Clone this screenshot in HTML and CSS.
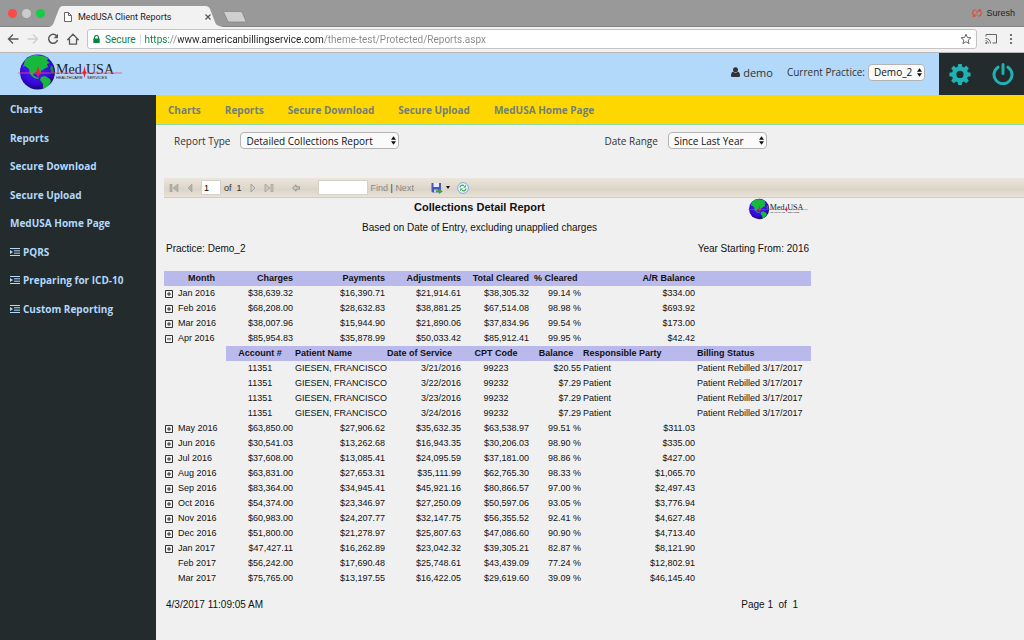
FILE: index.html
```html
<!DOCTYPE html>
<html lang="en">

<head>
    <meta charset="UTF-8">
    <meta name="viewport" content="width=device-width, initial-scale=1.0">
    <title>MedUSA Client Reports</title>
    <link rel="stylesheet" href="styles.css">
</head>

<body>
    <svg class="sprite" aria-hidden="true">
        <symbol id="plus" viewBox="0 0 8 8">
            <path d="M.5.5h7v7h-7zM2 4h4M4 2v4" fill="none" stroke="#333" />
        </symbol>
        <symbol id="minus" viewBox="0 0 8 8">
            <path d="M.5.5h7v7h-7zM2 4h4" fill="none" stroke="#333" />
        </symbol>
        <symbol id="indent" viewBox="0 0 10 8">
            <path d="M0 .5h10M4 2.8h6M4 5.200h6M0 7.500h10" fill="none" stroke="currentColor" />
            <path d="M0 2l3 2-3 2z" fill="currentColor" />
        </symbol>
        <symbol id="arrows" viewBox="0 0 6 10">
            <path d="M3 0l3 4H0zM3 10l3-4H0z" fill="#111" />
        </symbol>
    </svg>

    <div class="tabStrip">
        <div class="lights">
            <span class="light red"></span>
            <span class="light gray"></span>
            <span class="light green"></span>
        </div>
        <div class="tab">
            <svg class="tabShape" viewBox="0 0 174 21" preserveAspectRatio="none">
                <path d="M0 21C3 20 4 19 5 16l5-13C11 1 12 0 14 0h142c3 0 4 1 5 3l5 13c1 3 3 4 8 5z" fill="#f2f2f2" />
            </svg>
            <svg class="fileIcon" viewBox="0 0 8 10">
                <path d="M.5.5h4l3 3v6h-7zM4.500.5v3h3" fill="#fff" stroke="#666" />
            </svg>
            <span class="tabTitle">MedUSA Client Reports</span>
            <button class="tabClose" aria-label="Close tab">
                <svg viewBox="0 0 6 6"><path d="M.5.5l5 5M5.500.5l-5 5" stroke="#555" stroke-width="1.200" /></svg>
            </button>
        </div>
        <button class="newTab" aria-label="New tab">
            <svg viewBox="0 0 24 12"><path d="M2 .5h15c1 0 2 .5 2.500 1.500l3 7c.5 1.500 0 2-1 2H7c-1 0-2-.5-2.500-1.500L1 2C.5 1 1 .5 2 .5z" fill="#cfcfcf" stroke="#858585" stroke-width="0.800" /></svg>
        </button>
        <div class="profile">
            <svg viewBox="0 0 10 8"><path d="M3.500.8C0 1 0 6 2.500 7M.8 7.200h2.200V5M6.500 7.200C10 7 10 2 7.500 1M9.200.8H7V3M5 1.500v3M5 5.500v1.200" fill="none" stroke="#e04a2f" stroke-width="1.100" /></svg>
            <span>Suresh</span>
        </div>
    </div>

    <div class="browserBar">
        <button aria-label="Back"><svg viewBox="0 0 12 12"><path d="M11.500 6H1.500M6 1.500L1.500 6 6 10.500" fill="none" stroke="#5a5a5a" stroke-width="1.400" /></svg></button>
        <button aria-label="Forward"><svg viewBox="0 0 12 12"><path d="M.5 6h10M6 1.500L10.500 6 6 10.500" fill="none" stroke="#cfcfcf" stroke-width="1.400" /></svg></button>
        <button aria-label="Reload"><svg viewBox="0 0 12 12"><path d="M10 3.500A4.500 4.500 0 1 0 10.500 7" fill="none" stroke="#5a5a5a" stroke-width="1.500" /><path d="M11 .8V5.200H6.600z" fill="#5a5a5a" /></svg></button>
        <button aria-label="Home"><svg viewBox="0 0 12 12"><path d="M.8 6.500L6 1.200l5.200 5.300H9.500v4.700h-7V6.500z" fill="none" stroke="#5a5a5a" stroke-width="1.300" /></svg></button>
        <div class="addressBox">
            <svg class="lock" viewBox="0 0 7 8"><path d="M1.500 4V2.500a2 2 0 0 1 4 0V4" fill="none" stroke="#0b8043" stroke-width="1.200" /><path d="M.3 3.500h6.400V8H.3z" fill="#0b8043" /></svg>
            <span class="secure">Secure</span>
            <input class="address" type="text" aria-label="Address" value="https://www.americanbillingservice.com/theme-test/Protected/Reports.aspx">
            <button aria-label="Bookmark"><svg viewBox="0 0 12 12"><path d="M6 1.200l1.400 3.300 3.500.3-2.700 2.300.9 3.500L6 8.700l-3.100 1.900.9-3.500L1.100 4.800l3.500-.3z" fill="none" stroke="#666" /></svg></button>
        </div>
        <button aria-label="Cast"><svg viewBox="0 0 12 12"><path d="M1 3.500V1.500h10.500v8.500H7.500M.5 5.500c3 0 5 2 5 5M.5 7.700c1.800 0 2.800 1 2.800 2.800" fill="none" stroke="#666" /><circle cx="1.200" cy="10" r="0.900" fill="#666" /></svg></button>
        <button aria-label="Menu"><svg viewBox="0 0 12 12"><circle cx="6" cy="2" r="1.100" fill="#555" /><circle cx="6" cy="6" r="1.100" fill="#555" /><circle cx="6" cy="10" r="1.100" fill="#555" /></svg></button>
    </div>

    <header class="siteHeader">
        <svg class="logo" viewBox="0 0 108 38" role="img" aria-label="MedUSA Healthcare Services">
            <defs>
                <radialGradient id="globe" cx="45%" cy="40%" r="60%">
                    <stop offset="0" stop-color="#4a22ff" />
                    <stop offset="0.7" stop-color="#3908e0" />
                    <stop offset="1" stop-color="#1c0475" />
                </radialGradient>
            </defs>
            <g id="logo">
                <circle cx="20.500" cy="19" r="17.500" fill="url(#globe)" />
                <path d="M8 7c3-3 7-5 11-5l7 1 5 2-1 3 3 2-3 1 1 3-4 2-3 2-1 4-2-3-4 1-1 2 3 2 3 1-1 1-4-1-4-4-1-5-4-3-2 1z" fill="#18b83c" />
                <path d="M24 24l4-1 5 3 1 2-2 4-4 3-2 1v-5l-3-4z" fill="#18b83c" />
                <path d="M34 12l2 2 1 5-2 1-2-4z" fill="#0d8a3c" />
                <text x="39" y="21" class="logoName">Med</text>
                <text x="69" y="21" class="logoName">USA</text>
                <text x="39" y="26" class="logoSmall">HEALTHCARE</text>
                <text x="70" y="26" class="logoSmall">SERVICES</text>
                <path d="M1 20h104" fill="none" stroke="#e8506c" stroke-width="0.800" />
                <path d="M18 20l1.500-2 1.500-5 1.500 5 1.500 2-1.500 1-1.500 4-1.500-4zM65 20l1.500-2 1-5 1 5 1 2-1 1-1 4-1-4z" fill="#e8203c" />
            </g>
        </svg>
        <div class="user">
            <svg viewBox="0 0 9 10"><circle cx="4.500" cy="2.700" r="2.500" fill="#333" /><path d="M0 8.500C0 6 1 5 2.300 4.800a3.200 3.200 0 0 0 4.400 0C8 5 9 6 9 8.500 9 9.500 8.500 10 7.500 10h-6C.5 10 0 9.500 0 8.500z" fill="#333" /></svg>
            <span>demo</span>
        </div>
        <label for="practice">Current Practice:</label>
        <span class="selectWrap practice">
            <select id="practice"><option>Demo_2</option></select>
            <svg><use href="#arrows" /></svg>
        </span>
        <div class="headerTools">
            <button aria-label="Settings">
                <svg viewBox="0 0 22 22"><path fill="#20b2b2" fill-rule="evenodd" d="M9.200 1h3.600l.5 2.800 1.600.7 2.400-1.700 2.500 2.500-1.700 2.400.7 1.600 2.800.5v3.400l-2.800.5-.7 1.600 1.700 2.400-2.500 2.500-2.400-1.700-1.600.7-.5 2.800H9.200l-.5-2.800-1.600-.7-2.400 1.700-2.500-2.500 1.700-2.400-.7-1.600L.4 13.200V9.800l2.800-.5.7-1.600-1.700-2.400 2.500-2.500 2.400 1.700 1.600-.7zM11 7.800a3.600 3.600 0 1 0 0 7.200 3.600 3.600 0 0 0 0-7.200z" /></svg>
            </button>
            <button aria-label="Log out">
                <svg viewBox="0 0 22 22"><path d="M6 4.200a9 9 0 1 0 10 0M11 1.500v9" fill="none" stroke="#20b2b2" stroke-width="3" stroke-linecap="round" /></svg>
            </button>
        </div>
    </header>

    <div class="layout">
        <nav class="sidebar">
            <ul>
                <li><a href="#">Charts</a></li>
                <li><a href="#">Reports</a></li>
                <li><a href="#">Secure Download</a></li>
                <li><a href="#">Secure Upload</a></li>
                <li><a href="#">MedUSA Home Page</a></li>
                <li><a href="#"><svg><use href="#indent" /></svg>PQRS</a></li>
                <li><a href="#"><svg><use href="#indent" /></svg>Preparing for ICD-10</a></li>
                <li><a href="#"><svg><use href="#indent" /></svg>Custom Reporting</a></li>
            </ul>
        </nav>

        <main>
            <nav class="topNav">
                <a href="#">Charts</a>
                <a href="#">Reports</a>
                <a href="#">Secure Download</a>
                <a href="#">Secure Upload</a>
                <a href="#">MedUSA Home Page</a>
            </nav>

            <form class="filters">
                <div class="filter">
                    <label for="reportType">Report Type</label>
                    <span class="selectWrap reportType">
                        <select id="reportType"><option>Detailed Collections Report</option></select>
                        <svg><use href="#arrows" /></svg>
                    </span>
                </div>
                <div class="filter">
                    <label for="dateRange">Date Range</label>
                    <span class="selectWrap dateRange">
                        <select id="dateRange"><option>Since Last Year</option></select>
                        <svg><use href="#arrows" /></svg>
                    </span>
                </div>
            </form>

            <div class="reportBar">
                <div class="pager">
                    <button aria-label="First page"><svg viewBox="0 0 10 8"><path d="M1 0h2v8H1zM9 0v8L4 4z" fill="#b5b2ac" stroke="#97948e" stroke-width="0.500" /></svg></button>
                    <button aria-label="Previous page"><svg viewBox="0 0 10 8"><path d="M7 0v8L3 4z" fill="#b5b2ac" stroke="#97948e" stroke-width="0.500" /></svg></button>
                    <input class="pageNumber" type="text" value="1" aria-label="Page number">
                    <span>of&nbsp; 1</span>
                    <button aria-label="Next page"><svg viewBox="0 0 10 8"><path d="M3 0v8l4-4z" fill="#d5d2ca" stroke="#97948e" stroke-width="0.800" /></svg></button>
                    <button aria-label="Last page"><svg viewBox="0 0 10 8"><path d="M7 0h2v8H7zM1 0v8l5-4z" fill="#c8c5be" stroke="#97948e" stroke-width="0.600" /></svg></button>
                </div>
                <button aria-label="Back to parent"><svg viewBox="0 0 10 8"><path d="M1.500 4L5 .8v2h3.500v2.400H5v2z" fill="#d0cdc6" stroke="#8f8c86" stroke-width="0.900" /></svg></button>
                <div class="finder">
                    <input class="findText" type="text" aria-label="Find text">
                    <span><a href="#">Find</a> | <a href="#">Next</a></span>
                </div>
                <div class="export">
                    <button class="save" aria-label="Export"><svg viewBox="0 0 12 12"><path d="M.5 1h9.500v9.500H1.500l-1-1z" fill="#4a55c0" /><path d="M2.500 1h5.500v4H2.500z" fill="#e6ebff" /><path d="M3 7.500h4v3H3z" fill="#c5cbe8" /><path d="M5 8.200h3V6.500l3.800 3L8 12v-1.800H5z" fill="#3da53d" /></svg><svg class="caret" viewBox="0 0 4 3"><path d="M0 0h4L2 3z" fill="#111" /></svg></button>
                    <button class="refresh" aria-label="Refresh"><svg viewBox="0 0 12 12"><circle cx="6" cy="6" r="5.400" fill="#eef6ff" stroke="#7fa8d8" /><path d="M3 5.500c0-2 2.500-3 4-1.800M9 6.500c0 2-2.500 3-4 1.800" fill="none" stroke="#3ba556" stroke-width="1.200" /><path d="M8.800 2.800v2.700H6.200zM3.200 9.200V6.500h2.600z" fill="#3ba556" /></svg></button>
                </div>
            </div>

            <section class="report">
                <div class="reportHead">
                    <div class="titles">
                        <h1>Collections Detail Report</h1>
                        <p>Based on Date of Entry, excluding unapplied charges</p>
                    </div>
                    <svg class="smallLogo" viewBox="0 0 108 38" role="img" aria-label="MedUSA"><use href="#logo" /></svg>
                </div>
                <div class="reportInfo">
                    <span>Practice: Demo_2</span>
                    <span>Year Starting From: 2016</span>
                </div>

                <table>
                    <colgroup>
                        <col class="colToggle">
                        <col class="colMonth">
                        <col class="colCharges">
                        <col class="colPayments">
                        <col class="colAdjust">
                        <col class="colCleared">
                        <col class="colPercent">
                        <col class="colBalance">
                        <col>
                    </colgroup>
                    <thead>
                        <tr><th></th><th>Month</th><th class="num">Charges</th><th class="num">Payments</th><th class="num">Adjustments</th><th class="num">Total Cleared</th><th class="percent">% Cleared</th><th class="num">A/R Balance</th><th></th></tr>
                    </thead>
                    <tbody>
                        <tr><td><button aria-label="Expand"><svg><use href="#plus" /></svg></button></td><td>Jan 2016</td><td class="num">$38,639.32</td><td class="num">$16,390.71</td><td class="num">$21,914.61</td><td class="num">$38,305.32</td><td class="num">99.14 %</td><td class="num">$334.00</td><td></td></tr>
                        <tr><td><button aria-label="Expand"><svg><use href="#plus" /></svg></button></td><td>Feb 2016</td><td class="num">$68,208.00</td><td class="num">$28,632.83</td><td class="num">$38,881.25</td><td class="num">$67,514.08</td><td class="num">98.98 %</td><td class="num">$693.92</td><td></td></tr>
                        <tr><td><button aria-label="Expand"><svg><use href="#plus" /></svg></button></td><td>Mar 2016</td><td class="num">$38,007.96</td><td class="num">$15,944.90</td><td class="num">$21,890.06</td><td class="num">$37,834.96</td><td class="num">99.54 %</td><td class="num">$173.00</td><td></td></tr>
                        <tr><td><button aria-label="Collapse"><svg><use href="#minus" /></svg></button></td><td>Apr 2016</td><td class="num">$85,954.83</td><td class="num">$35,878.99</td><td class="num">$50,033.42</td><td class="num">$85,912.41</td><td class="num">99.95 %</td><td class="num">$42.42</td><td></td></tr>
                        <!-- accounts behind the April total -->
                        <tr><td colspan="2"></td><th>Account #</th><th class="text">Patient Name</th><th class="text">Date of Service</th><th>CPT Code</th><th>Balance</th><th class="text">Responsible Party</th><th class="text">Billing Status</th></tr>
                        <tr><td colspan="2"></td><td class="center">11351</td><td>GIESEN, FRANCISCO</td><td class="num">3/21/2016</td><td class="center">99223</td><td class="num">$20.55</td><td>Patient</td><td>Patient Rebilled 3/17/2017</td></tr>
                        <tr><td colspan="2"></td><td class="center">11351</td><td>GIESEN, FRANCISCO</td><td class="num">3/22/2016</td><td class="center">99232</td><td class="num">$7.29</td><td>Patient</td><td>Patient Rebilled 3/17/2017</td></tr>
                        <tr><td colspan="2"></td><td class="center">11351</td><td>GIESEN, FRANCISCO</td><td class="num">3/23/2016</td><td class="center">99232</td><td class="num">$7.29</td><td>Patient</td><td>Patient Rebilled 3/17/2017</td></tr>
                        <tr><td colspan="2"></td><td class="center">11351</td><td>GIESEN, FRANCISCO</td><td class="num">3/24/2016</td><td class="center">99232</td><td class="num">$7.29</td><td>Patient</td><td>Patient Rebilled 3/17/2017</td></tr>
                        <tr><td><button aria-label="Expand"><svg><use href="#plus" /></svg></button></td><td>May 2016</td><td class="num">$63,850.00</td><td class="num">$27,906.62</td><td class="num">$35,632.35</td><td class="num">$63,538.97</td><td class="num">99.51 %</td><td class="num">$311.03</td><td></td></tr>
                        <tr><td><button aria-label="Expand"><svg><use href="#plus" /></svg></button></td><td>Jun 2016</td><td class="num">$30,541.03</td><td class="num">$13,262.68</td><td class="num">$16,943.35</td><td class="num">$30,206.03</td><td class="num">98.90 %</td><td class="num">$335.00</td><td></td></tr>
                        <tr><td><button aria-label="Expand"><svg><use href="#plus" /></svg></button></td><td>Jul 2016</td><td class="num">$37,608.00</td><td class="num">$13,085.41</td><td class="num">$24,095.59</td><td class="num">$37,181.00</td><td class="num">98.86 %</td><td class="num">$427.00</td><td></td></tr>
                        <tr><td><button aria-label="Expand"><svg><use href="#plus" /></svg></button></td><td>Aug 2016</td><td class="num">$63,831.00</td><td class="num">$27,653.31</td><td class="num">$35,111.99</td><td class="num">$62,765.30</td><td class="num">98.33 %</td><td class="num">$1,065.70</td><td></td></tr>
                        <tr><td><button aria-label="Expand"><svg><use href="#plus" /></svg></button></td><td>Sep 2016</td><td class="num">$83,364.00</td><td class="num">$34,945.41</td><td class="num">$45,921.16</td><td class="num">$80,866.57</td><td class="num">97.00 %</td><td class="num">$2,497.43</td><td></td></tr>
                        <tr><td><button aria-label="Expand"><svg><use href="#plus" /></svg></button></td><td>Oct 2016</td><td class="num">$54,374.00</td><td class="num">$23,346.97</td><td class="num">$27,250.09</td><td class="num">$50,597.06</td><td class="num">93.05 %</td><td class="num">$3,776.94</td><td></td></tr>
                        <tr><td><button aria-label="Expand"><svg><use href="#plus" /></svg></button></td><td>Nov 2016</td><td class="num">$60,983.00</td><td class="num">$24,207.77</td><td class="num">$32,147.75</td><td class="num">$56,355.52</td><td class="num">92.41 %</td><td class="num">$4,627.48</td><td></td></tr>
                        <tr><td><button aria-label="Expand"><svg><use href="#plus" /></svg></button></td><td>Dec 2016</td><td class="num">$51,800.00</td><td class="num">$21,278.97</td><td class="num">$25,807.63</td><td class="num">$47,086.60</td><td class="num">90.90 %</td><td class="num">$4,713.40</td><td></td></tr>
                        <tr><td><button aria-label="Expand"><svg><use href="#plus" /></svg></button></td><td>Jan 2017</td><td class="num">$47,427.11</td><td class="num">$16,262.89</td><td class="num">$23,042.32</td><td class="num">$39,305.21</td><td class="num">82.87 %</td><td class="num">$8,121.90</td><td></td></tr>
                        <tr><td></td><td>Feb 2017</td><td class="num">$56,242.00</td><td class="num">$17,690.48</td><td class="num">$25,748.61</td><td class="num">$43,439.09</td><td class="num">77.24 %</td><td class="num">$12,802.91</td><td></td></tr>
                        <tr><td></td><td>Mar 2017</td><td class="num">$75,765.00</td><td class="num">$13,197.55</td><td class="num">$16,422.05</td><td class="num">$29,619.60</td><td class="num">39.09 %</td><td class="num">$46,145.40</td><td></td></tr>
                    </tbody>
                </table>

                <div class="reportFoot">
                    <span>4/3/2017 11:09:05 AM</span>
                    <span>Page 1&nbsp; of&nbsp; 1</span>
                </div>
            </section>
        </main>
    </div>
</body>

</html>
```

FILE: styles.css
```css
* {
  margin: 0;
  padding: 0;
  box-sizing: border-box;
}

body {
  min-height: 100vh;
  display: flex;
  flex-direction: column;
  font-family: "Open Sans", sans-serif;
  font-size: 10px;
  color: #333;
  background-color: #f0f0f0;
}

button {
  border: none;
  background: none;
  cursor: pointer;
}

svg {
  display: block;
}

a {
  color: inherit;
  text-decoration: none;
}

.sprite {
  position: absolute;
  width: 0;
  height: 0;
}

.logoName {
  font-family: "Liberation Serif", serif;
  font-size: 14px;
  fill: #222;
}

.logoSmall {
  font-family: "Liberation Sans", sans-serif;
  font-size: 4px;
  fill: #222;
}

/* browser window */
.tabStrip {
  display: flex;
  align-items: flex-end;
  height: 27px;
  background-color: #999;
  border-bottom: 1px solid #858585;
  font-family: Roboto, sans-serif;
  color: #222;
}

.lights {
  display: flex;
  gap: 5px;
  align-self: center;
  padding: 0 4px 0 8px;
}

.light {
  width: 9px;
  height: 9px;
  border-radius: 50%;
}

.red {
  background-color: #fc4a48;
}

.gray {
  background-color: #ccc;
}

.green {
  background-color: #15cc45;
}

.tab {
  position: relative;
  display: flex;
  align-items: center;
  width: 174px;
  height: 21px;
  padding: 0 12px 0 15px;
  margin-bottom: -1px;
  font-size: 9px;
}

.tabShape {
  position: absolute;
  inset: 0;
  width: 100%;
  height: 100%;
}

.fileIcon {
  position: relative;
  width: 8px;
  height: 10px;
  margin-right: 6px;
}

.tabTitle {
  position: relative;
  flex: 1;
  white-space: nowrap;
}

.tabClose {
  position: relative;
}

.tabClose svg {
  width: 6px;
  height: 6px;
}

.newTab {
  padding-bottom: 3px;
}

.newTab svg {
  width: 24px;
  height: 12px;
}

.profile {
  display: flex;
  align-items: center;
  align-self: center;
  gap: 4px;
  margin-left: auto;
  padding-right: 9px;
  font-family: "Liberation Sans", sans-serif;
  font-size: 9px;
}

.profile svg {
  width: 10px;
  height: 8px;
}

.browserBar {
  display: flex;
  align-items: center;
  gap: 8px;
  height: 26px;
  padding: 0 7px 1px;
  background-color: #f2f2f2;
  border-bottom: 1px solid #b8b8b8;
  font-family: Roboto, sans-serif;
}

.browserBar button svg {
  width: 12px;
  height: 12px;
}

.addressBox {
  flex: 1;
  display: flex;
  align-items: center;
  height: 20px;
  padding: 0 4px 0 5px;
  background-color: #fff;
  border: 1px solid #c4c4c4;
  border-radius: 3px;
}

.lock {
  width: 7px;
  height: 8px;
  margin-right: 5px;
}

.secure {
  padding-right: 4px;
  margin-right: 4px;
  border-right: 1px solid #ddd;
  color: #0b8043;
}

/* scheme, host and path each get their own colour */
.address {
  flex: 1;
  min-width: 0;
  border: none;
  outline: none;
  font-family: Roboto, sans-serif;
  font-size: 10px;
  color: transparent;
  background: linear-gradient(to right, #0b8043 24px, #888 24px, #888 33px, #222 33px, #222 179px, #888 179px);
  -webkit-background-clip: text;
  background-clip: text;
}

/* site header */
.siteHeader {
  display: flex;
  align-items: center;
  height: 42px;
  padding-left: 17px;
  font-size: 10px;
  background-color: #b2d8fa;
}

.logo {
  width: 108px;
  height: 38px;
  margin: 0 auto 4px 0;
}

.user {
  display: flex;
  align-items: center;
  gap: 3px;
  margin: 0 14px 4px 0;
  font-size: 11px;
}

.user svg {
  width: 9px;
  height: 10px;
}

.siteHeader label,
.practice {
  margin-bottom: 4px;
}

.selectWrap {
  position: relative;
  display: inline-block;
}

.selectWrap select {
  display: block;
  width: 100%;
  height: 17px;
  padding: 0 5px;
  appearance: none;
  border: 1px solid #b4b4b4;
  border-radius: 4px;
  background-color: #fafafa;
  font-family: "Open Sans", sans-serif;
  font-size: 10px;
  color: #111;
}

.selectWrap svg {
  position: absolute;
  right: 3px;
  top: 4px;
  width: 5px;
  height: 9px;
  pointer-events: none;
}

.practice {
  width: 57px;
  margin-left: 3px;
  margin-right: 14px;
}

.headerTools {
  display: flex;
  align-items: center;
  justify-content: center;
  gap: 21px;
  width: 85px;
  height: 100%;
  background-color: #232b2d;
}

.headerTools svg {
  width: 22px;
  height: 22px;
}

.layout {
  flex: 1;
  display: flex;
}

.sidebar {
  width: 156px;
  background-color: #232b2d;
}

.sidebar ul {
  display: flex;
  flex-direction: column;
  height: 228px;
  list-style: none;
}

.sidebar li {
  flex: 1;
  display: flex;
  align-items: center;
  padding-left: 10px;
}

.sidebar a {
  display: flex;
  align-items: center;
  gap: 3px;
  font-weight: bold;
  color: #b2d8fa;
}

.sidebar svg {
  width: 10px;
  height: 8px;
}

main {
  flex: 1;
  min-width: 0;
}

.topNav {
  display: flex;
  align-items: center;
  gap: 24px;
  height: 30px;
  padding-left: 12px;
  background-color: #ffd700;
  border-bottom: 1px solid #8fd9a8;
  font-weight: bold;
  color: #71807b;
}

.filters {
  display: flex;
  gap: 205px;
  padding: 7px 18px 0;
}

.filter {
  display: flex;
  align-items: center;
  height: 17px;
  gap: 10px;
}

.reportType {
  width: 159px;
}

.dateRange {
  width: 99px;
}

/* report viewer toolbar */
.reportBar {
  display: flex;
  align-items: center;
  gap: 17px;
  height: 20px;
  margin: 29px 0 0 8px;
  padding-left: 5px;
  background: linear-gradient(#ebe5dc, #dcd4c8 60%, #e8e2d8);
  border-bottom: 1px solid #ccc;
  font-family: "Liberation Sans", sans-serif;
  font-size: 9px;
}

.reportBar svg {
  width: 10px;
  height: 8px;
}

.reportBar input {
  height: 15px;
  border: 1px solid #d5d2ca;
  background-color: #fff;
  font-family: "Liberation Sans", sans-serif;
  font-size: 9px;
}

.pager {
  display: flex;
  align-items: center;
  gap: 6px;
}

.pageNumber {
  width: 20px;
  padding-left: 2px;
}

.pager span {
  margin-left: -3px;
}

.finder {
  display: flex;
  align-items: center;
  gap: 3px;
}

.finder a {
  color: #888;
}

.findText {
  width: 50px;
}

.export {
  display: flex;
  align-items: center;
  gap: 7px;
}

.save {
  display: flex;
  align-items: center;
  gap: 3px;
}

.export svg {
  width: 12px;
  height: 12px;
}

.export .caret {
  width: 4px;
  height: 3px;
}

/* report */
.report {
  max-width: 655px;
  padding-left: 8px;
  font-family: "Liberation Sans", sans-serif;
  color: #111;
}

.reportHead {
  display: grid;
  grid-template-columns: 48px 1fr 64px;
}

.titles {
  grid-column: 2;
  text-align: center;
}

h1 {
  padding-top: 1px;
  font-size: 11px;
  line-height: 16px;
}

.titles p {
  padding-top: 6px;
  line-height: 14px;
}

.smallLogo {
  width: 63px;
  height: 22px;
}

.reportInfo,
.reportFoot {
  display: flex;
  justify-content: space-between;
  padding: 8px 2px 0;
  line-height: 12px;
}

table {
  width: 100%;
  margin-top: 16px;
  table-layout: fixed;
  border-collapse: collapse;
  font-size: 9px;
}

th,
td {
  height: 15px;
  padding: 0 1px;
  line-height: 15px;
  white-space: nowrap;
}

th {
  background-color: #bab9ec;
  text-align: center;
}

td {
  text-align: left;
}

th.text {
  text-align: left;
}

td.num,
th.num {
  text-align: right;
}

td.center {
  text-align: center;
}

th.percent {
  padding-left: 4px;
  text-align: left;
}

td button {
  display: block;
}

td svg {
  width: 8px;
  height: 8px;
}

.colToggle {
  width: 13px;
}

.colMonth {
  width: 49px;
}

.colCharges {
  width: 68px;
}

.colPayments {
  width: 92px;
}

.colAdjust {
  width: 76px;
}

.colCleared {
  width: 68px;
}

.colPercent {
  width: 52px;
}

.colBalance {
  width: 114px;
}

.reportFoot {
  padding: 13px 13px 20px 2px;
}
```
